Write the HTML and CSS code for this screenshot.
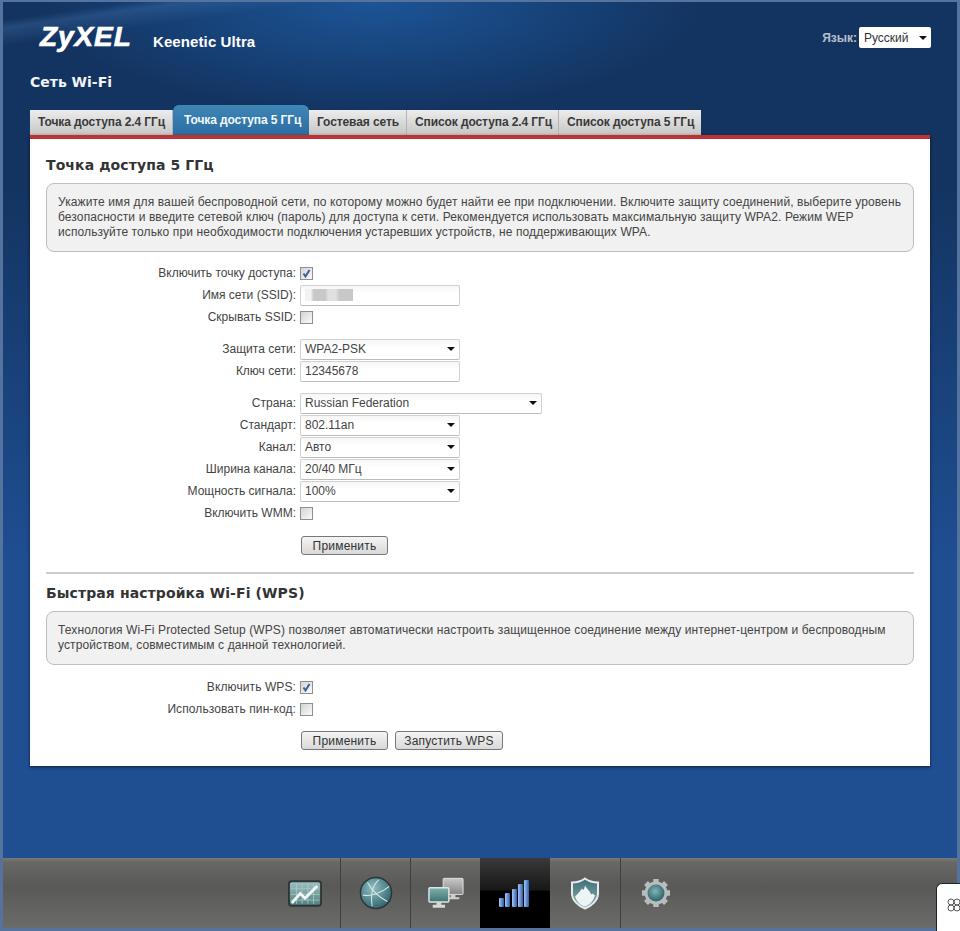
FILE: index.html
```html
<!DOCTYPE html>
<html lang="ru">
<head>
<meta charset="utf-8">
<title>Сеть Wi-Fi</title>
<link rel="stylesheet" href="styles.css">
</head>
<body>
<div class="frame">
  <header class="top">
    <div class="brand">
      <span class="logo">ZyXEL</span>
      <span class="model">Keenetic Ultra</span>
      <div class="lang">
        <span class="lang-label">Язык:</span>
        <div class="lang-select"><span>Русский</span><i class="caret"></i></div>
      </div>
    </div>
    <h1 class="page-title">Сеть Wi-Fi</h1>
  </header>

  <nav class="tabs">
    <a class="tab">Точка доступа 2.4 ГГц</a>
    <a class="tab active">Точка доступа 5 ГГц</a>
    <a class="tab">Гостевая сеть</a>
    <a class="tab">Список доступа 2.4 ГГц</a>
    <a class="tab">Список доступа 5 ГГц</a>
  </nav>

  <main class="panel">
    <h2 class="section-title">Точка доступа 5 ГГц</h2>
    <p class="info info-first">Укажите имя для вашей беспроводной сети, по которому можно будет найти ее при подключении. Включите защиту соединений, выберите уровень безопасности и введите сетевой ключ (пароль) для доступа к сети. Рекомендуется использовать максимальную защиту WPA2. Режим WEP используйте только при необходимости подключения устаревших устройств, не поддерживающих WPA.</p>

    <div class="form">
      <div class="row"><label>Включить точку доступа:</label><span class="check on"><svg viewBox="0 0 11 11"><path d="M2.5 5.5 4.5 8.5 8.5 2" fill="none" stroke="#3b5f9e" stroke-width="2"/></svg></span></div>
      <div class="row"><label>Имя сети (SSID):</label><div class="field"><span class="blur"></span></div></div>
      <div class="row"><label>Скрывать SSID:</label><span class="check"></span></div>
      <div class="row gap"><label>Защита сети:</label><div class="field sel"><span>WPA2-PSK</span><i class="caret"></i></div></div>
      <div class="row"><label>Ключ сети:</label><div class="field"><span>12345678</span></div></div>
      <div class="row gap"><label>Страна:</label><div class="field sel wide"><span>Russian Federation</span><i class="caret"></i></div></div>
      <div class="row"><label>Стандарт:</label><div class="field sel"><span>802.11an</span><i class="caret"></i></div></div>
      <div class="row"><label>Канал:</label><div class="field sel"><span>Авто</span><i class="caret"></i></div></div>
      <div class="row"><label>Ширина канала:</label><div class="field sel"><span>20/40 МГц</span><i class="caret"></i></div></div>
      <div class="row"><label>Мощность сигнала:</label><div class="field sel"><span>100%</span><i class="caret"></i></div></div>
      <div class="row"><label>Включить WMM:</label><span class="check"></span></div>
      <div class="actions"><button class="btn btn-apply">Применить</button></div>
    </div>

    <hr class="divider">

    <h2 class="section-title">Быстрая настройка Wi-Fi (WPS)</h2>
    <p class="info info-second">Технология Wi-Fi Protected Setup (WPS) позволяет автоматически настроить защищенное соединение между интернет-центром и беспроводным устройством, совместимым с данной технологией.</p>

    <div class="form form-wps">
      <div class="row"><label>Включить WPS:</label><span class="check on"><svg viewBox="0 0 11 11"><path d="M2.5 5.5 4.5 8.5 8.5 2" fill="none" stroke="#3b5f9e" stroke-width="2"/></svg></span></div>
      <div class="row"><label>Использовать пин-код:</label><span class="check"></span></div>
      <div class="actions actions-wps"><button class="btn btn-apply">Применить</button><button class="btn btn-wps">Запустить WPS</button></div>
    </div>
  </main>

  <footer class="dock">
    <div class="dock-item first">
      <svg viewBox="0 0 36 28" width="34" height="27"><defs><linearGradient id="g0" x1="0" x2="0" y1="0" y2="1"><stop offset="0" stop-color="#9fc3c4"/><stop offset="1" stop-color="#4f7f80"/></linearGradient></defs><rect x="1" y="1" width="34" height="26" rx="3" fill="url(#g0)" stroke="#2f3535" stroke-width="2"/><path d="M3 9H33M3 15H33M3 21H33M9 3V25M15 3V25M21 3V25M27 3V25" stroke="#b5cfcf" stroke-width=".7"/><path d="M4 24 13 14 18 19 31 6" fill="none" stroke="#f2f5f5" stroke-width="3"/></svg>
    </div>
    <div class="dock-item">
      <svg viewBox="0 0 36 36" width="34" height="34"><defs><radialGradient id="g1" cx=".4" cy=".35" r=".7"><stop offset="0" stop-color="#8fc0c4"/><stop offset="1" stop-color="#2d6068"/></radialGradient></defs><circle cx="18" cy="18" r="16.5" fill="url(#g1)" stroke="#2a3434" stroke-width="1.5"/><path d="M9 7C14 16 20 22 30 27M21 4C14 10 12 20 14 32M4 20C12 22 24 18 32 11" fill="none" stroke="#d8e8e8" stroke-width="1.1"/></svg>
    </div>
    <div class="dock-item">
      <svg viewBox="0 0 38 34" width="36" height="33"><defs><linearGradient id="g4" x1="0" x2="0" y1="0" y2="1"><stop offset="0" stop-color="#c8c8c8"/><stop offset="1" stop-color="#858585"/></linearGradient><linearGradient id="g5" x1="0" x2="0" y1="0" y2="1"><stop offset="0" stop-color="#7fb0ae"/><stop offset="1" stop-color="#3f7270"/></linearGradient></defs><rect x="16" y="1" width="21" height="17" rx="1" fill="url(#g4)" stroke="#e4e4e4"/><path d="M24 18h5v3h4v2H20v-2h4z" fill="#cfcfcf"/><rect x="1" y="11" width="21" height="15" rx="1" fill="url(#g5)" stroke="#dfe6e6" stroke-width="1.5"/><path d="M9 26h5v3h4v3H5v-3h4z" fill="#d8d8d8"/></svg>
    </div>
    <div class="dock-item active">
      <svg class="signal" viewBox="0 0 32 28" width="32" height="28"><defs><linearGradient id="g2" x1="0" x2="1" y1="0" y2="0"><stop offset="0" stop-color="#a9c8f2"/><stop offset="1" stop-color="#2a5db0"/></linearGradient></defs><rect x="1" y="19" width="5" height="9" rx="1" fill="url(#g2)"/><rect x="7" y="14" width="5" height="14" rx="1" fill="url(#g2)"/><rect x="14" y="10" width="5" height="18" rx="1" fill="url(#g2)"/><rect x="20" y="5" width="5" height="23" rx="1" fill="url(#g2)"/><rect x="26" y="1" width="5" height="27" rx="1" fill="url(#g2)"/></svg>
    </div>
    <div class="dock-item">
      <svg viewBox="0 0 28 32" width="28" height="33"><defs><linearGradient id="g6" x1="0" x2="0" y1="0" y2="1"><stop offset="0" stop-color="#3d6f75"/><stop offset="1" stop-color="#8cb0b2"/></linearGradient></defs><path d="M14 1C18 4 22 5 27 5V16C27 23 20 29 14 31 8 29 1 23 1 16V5C6 5 10 4 14 1Z" fill="url(#g6)" stroke="#e6ebeb" stroke-width="2"/><path d="M4 19C7 16 9 14 11 11 12 13 13 13 14 8 16 12 19 13 20 17 21 16 22 16 24 18 22 25 17 28 14 29 10 28 6 25 4 19Z" fill="#eef3f3"/></svg>
    </div>
    <div class="dock-item last">
      <svg viewBox="0 0 32 32" width="32" height="32"><defs><radialGradient id="g3" cx=".45" cy=".4" r=".6"><stop offset="0" stop-color="#7fb4b8"/><stop offset="1" stop-color="#2f6267"/></radialGradient></defs><circle cx="16" cy="16" r="11.5" fill="#b9bcbc"/><path d="M16 2V30M2 16H30M6 6 26 26M26 6 6 26" stroke="#b9bcbc" stroke-width="5.5"/><circle cx="16" cy="16" r="8.5" fill="url(#g3)"/></svg>
    </div>
  </footer>

  <aside class="widget">
    <svg viewBox="0 0 16 16" width="16" height="16"><g fill="none" stroke="#555"><circle cx="5" cy="5" r="3"/><circle cx="11" cy="5" r="3"/><circle cx="5" cy="11" r="3"/><circle cx="11" cy="11" r="3"/></g></svg>
  </aside>
</div>
</body>
</html>
```

FILE: styles.css
```css
* { box-sizing: border-box; }
html, body { margin: 0; padding: 0; }
body {
  width: 960px;
  height: 931px;
  overflow: hidden;
  font-family: "Liberation Sans", Arial, sans-serif;
  font-size: 12px;
  color: #333;
}
.frame {
  position: relative;
  width: 960px;
  height: 931px;
  display: flex;
  flex-direction: column;
  border: solid #54739f;
  border-width: 2px 3px 3px;
  background:
    linear-gradient(172deg, rgba(80,130,190,0) 18px, rgba(80,130,190,.28) 26px, rgba(80,130,190,0) 44px) 0 0 / 500px 60px no-repeat,
    radial-gradient(ellipse 330px 110px at 370px 0, rgba(30,90,160,.85), rgba(30,90,160,0) 100%),
    linear-gradient(#133461 0, #133461 180px, #1f4e91 560px, #1f4e91 100%);
}
.top { height: 108px; flex: none; padding-left: 27px; color: #fff; }
.brand { display: flex; align-items: center; height: 50px; padding: 0 26px 0 10px; margin-top: 11px; }
.logo {
  width: 113px;
  font: italic bold 28px/30px "Liberation Sans", Arial, sans-serif;
  letter-spacing: .9px;
  -webkit-text-stroke: .7px #fff;
  margin-top: -3px;
}
.model { font: bold 15px/18px "Liberation Sans", Arial, sans-serif; letter-spacing: .1px; margin-top: 8px; }
.lang { margin-left: auto; display: flex; align-items: center; gap: 2px; margin-top: -1px; }
.lang-label { color: #b7c0cc; font-weight: bold; font-size: 12px; }
.lang-select {
  display: flex;
  align-items: center;
  justify-content: space-between;
  width: 72px;
  height: 21px;
  padding: 0 4px 0 5px;
  background: #fff;
  border-radius: 2px;
  color: #333;
}
.page-title { margin: 11px 0 0; font: bold 14px/16px "DejaVu Sans", Verdana, sans-serif; color: #f2f5f8; }
.caret {
  width: 0;
  height: 0;
  border: 4px solid transparent;
  border-top: 4px solid #111;
  border-bottom: 0;
}

.tabs { display: flex; align-items: flex-end; height: 25px; padding-left: 27px; flex: none; }
.tab {
  height: 25px;
  padding: 0 8px 1px;
  display: flex;
  align-items: center;
  font-weight: bold;
  font-size: 12px;
  letter-spacing: -.1px;
  color: #3a3a3a;
  background: linear-gradient(#ececec, #c6c6c6);
  border-right: 1px solid #b4b4b4;
  white-space: nowrap;
}
.tab:first-child { width: 143px; }
.tab.active {
  width: 136px;
  height: 30px;
  margin-top: -5px;
  padding: 0 11px;
  border: 0;
  border-radius: 6px 6px 0 0;
  color: #f2f6fa;
  background: linear-gradient(#3f86b6, #2c6da3);
}
.tab:nth-child(3) { width: 98px; }
.tab:nth-child(4) { width: 152px; }
.tab:nth-child(5) { width: 142px; border-right: 0; }

.panel {
  width: 900px;
  height: 631px;
  margin-left: 27px;
  flex: none;
  padding: 0 16px;
  background: #fff;
  border-top: 4px solid #bd3233;
  box-shadow: 0 1px 3px rgba(0,0,0,.6);
  display: flow-root;
}
.section-title { margin: 17px 0 0; font: bold 14px/18px "DejaVu Sans", Verdana, sans-serif; color: #333; letter-spacing: .1px; }
.info {
  margin: 0;
  padding: 11px 11px 11px;
  background: #f1f1f1;
  border: 1px solid #bdbdbd;
  border-radius: 8px;
  font-size: 12px;
  line-height: 15px;
  letter-spacing: .11px;
  color: #444;
}
.info-first { margin-top: 9px; height: 69px; }
.info-second { margin-top: 9px; height: 54px; }

.form { margin-top: 10px; }
.form-wps { margin-top: 11px; }
.row { display: flex; align-items: center; height: 22px; }
.row.gap { margin-top: 10px; }
.row label { width: 254px; text-align: right; padding-right: 4px; color: #444; flex: none; }
.form-wps .row label { letter-spacing: .1px; }
.check {
  width: 13px;
  height: 13px;
  border: 1px solid #8e8f8f;
  background: linear-gradient(135deg, #d4d4d4, #fafafa);
  display: block;
}
.check svg { display: block; width: 11px; height: 11px; }
.field {
  width: 160px;
  height: 21px;
  padding: 0 4px;
  display: flex;
  align-items: center;
  justify-content: space-between;
  background: linear-gradient(#f6f6f6, #fff 40%);
  border: 1px solid #d2d2d2;
  border-bottom-color: #bbb;
  border-radius: 2px;
  color: #444;
  font-size: 12px;
}
.field.wide { width: 242px; }
.blur {
  width: 48px;
  height: 12px;
  background: linear-gradient(90deg, #f2f2f2 0 12%, #c8c8c8 18% 42%, #e0e0e0 48% 64%, #c8c8c8 72% 100%);
}
.actions { display: flex; gap: 7px; margin: 12px 0 0 255px; }
.actions-wps { margin-top: 11px; }
.btn {
  height: 19px;
  padding: 0;
  font: 12px "Liberation Sans", Arial, sans-serif;
  letter-spacing: .2px;
  color: #333;
  background: linear-gradient(#f4f4f4, #d9d9d9);
  border: 1px solid #777;
  border-radius: 3px;
}
.btn-apply { width: 87px; }
.btn-wps { width: 108px; }
.divider { margin: 17px 0 0; border: 0; border-top: 2px solid #ccc; }
.divider + .section-title { margin-top: 10px; }

.dock {
  position: absolute;
  left: 0;
  right: 0;
  top: 856px;
  height: 70px;
  display: flex;
  justify-content: center;
  background: linear-gradient(#7a7a77 0, #686866 4px, #595958 40%, #6b6b6a 100%);
}
.dock-item {
  width: 70px;
  height: 70px;
  display: flex;
  align-items: center;
  justify-content: center;
  border-left: 1px solid #3f3f3f;
}
.dock-item.first { border-left: 0; }
.dock-item.active {
  border-left: 0;
  background: linear-gradient(#3a3a3a 0, #171717 46%, #000 47%, #000 100%);
}
.dock-item.active + .dock-item { border-left: 0; }
.signal { margin-right: 2px; }
.widget {
  position: absolute;
  right: -3px;
  bottom: -3px;
  width: 24px;
  height: 48px;
  background: #fff;
  border: 1px solid #222;
  border-right: 0;
  border-bottom: 0;
  border-radius: 6px 0 0 0;
  padding: 13px 0 0 9px;
}
```
